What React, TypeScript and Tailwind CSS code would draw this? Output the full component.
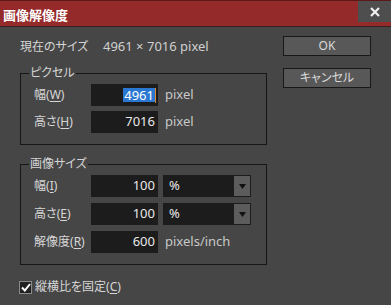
import React from "react";

const font = "font-['Noto_Sans','Noto_Sans_CJK_JP',sans-serif] [font-feature-settings:'palt']";

function NumInput({ value, selected }: { value: string; selected?: boolean }) {
  return (
    <div className="w-[67px] h-[22px] bg-[#1c1c1c] flex items-center justify-end pr-[2px] text-[13px] text-[#e8e8e8]">
      {selected ? (
        <>
          <span className="bg-[#2a78d2] text-white px-[1px] leading-[14px]">{value}</span>
          <span className="w-[1px] h-[15px] bg-[#e08a2a]" />
        </>
      ) : (
        <span className="pr-[1px]">{value}</span>
      )}
    </div>
  );
}

function Select({ value }: { value: string }) {
  return (
    <div className="w-[88px] h-[22px] bg-[#1c1c1c] flex items-stretch p-[1px] pr-[1px]">
      <div className="flex-1 flex items-center pl-[5px] text-[13px] text-[#e8e8e8]">{value}</div>
      <div className="w-[16px] bg-[#5c5c5c] flex items-center justify-center">
        <svg width="7" height="5" viewBox="0 0 7 5">
          <path d="M0 0 H7 L3.5 5 Z" fill="#111" />
        </svg>
      </div>
    </div>
  );
}

function Label({ text, k }: { text: string; k: string }) {
  return (
    <div className="w-[57px] shrink-0 text-[12px] text-[#d6d6d6] whitespace-nowrap">
      {text}(<u className="underline-offset-2">{k}</u>)
    </div>
  );
}

export default function App() {
  return (
    <div className={`w-[391px] h-[305px] bg-[#464646] flex flex-col overflow-hidden ${font}`}>
      <div className="h-[27px] bg-[#952a2b] border-t border-[#5a1a1a] border-b border-b-[#3a2020] flex items-start justify-between">
        <div className="pl-[3px] pt-[6px] text-[13px] font-bold text-white leading-[16px]">画像解像度</div>
        <div className="w-[33px] h-[21px] bg-[#4e4e4e] flex items-center justify-center">
          <svg width="10" height="10" viewBox="0 0 10 10">
            <path d="M1 1 L9 9 M9 1 L1 9" stroke="#f0f0f0" strokeWidth="2.2" />
          </svg>
        </div>
      </div>
      <div className="flex pl-[20px] gap-[16px]">
        <div className="w-[247px] flex flex-col">
          <div className="h-[16px] mt-[12px] flex items-center text-[12px] text-[#d6d6d6]">
            <div className="w-[83px] shrink-0">現在のサイズ</div>
            <div className="text-[13px] text-[#d0d0d0] whitespace-nowrap">4961 × 7016 pixel</div>
          </div>
          <fieldset className="mt-[10px] border border-[#161616] pl-[13px] pb-[11px] pt-[3px] flex flex-col gap-[5px]">
            <legend className="-ml-[5px] px-[1px] text-[12px] leading-[16px] text-[#d6d6d6]">ピクセル</legend>
            <div className="flex items-center">
              <Label text="幅" k="W" />
              <NumInput value="4961" selected />
              <span className="ml-[7px] text-[13px] text-[#c8c8c8]">pixel</span>
            </div>
            <div className="flex items-center">
              <Label text="高さ" k="H" />
              <NumInput value="7016" />
              <span className="ml-[7px] text-[13px] text-[#c8c8c8]">pixel</span>
            </div>
          </fieldset>
          <fieldset className="mt-[11px] border border-[#161616] pl-[13px] pb-[11px] pt-[3px] flex flex-col gap-[6px]">
            <legend className="-ml-[5px] px-[1px] text-[12px] leading-[16px] text-[#d6d6d6]">画像サイズ</legend>
            <div className="flex items-center">
              <Label text="幅" k="I" />
              <NumInput value="100" />
              <div className="ml-[5px]"><Select value="%" /></div>
            </div>
            <div className="flex items-center">
              <Label text="高さ" k="E" />
              <NumInput value="100" />
              <div className="ml-[5px]"><Select value="%" /></div>
            </div>
            <div className="flex items-center">
              <Label text="解像度" k="R" />
              <NumInput value="600" />
              <span className="ml-[7px] text-[13px] text-[#c8c8c8]">pixels/inch</span>
            </div>
          </fieldset>
          <div className="mt-[13px] -ml-[1px] flex items-center gap-[3px]">
            <div className="w-[13px] h-[13px] border border-[#8a8a8a] bg-[#222] flex items-center justify-center">
              <svg width="10" height="9" viewBox="0 0 10 9">
                <path d="M1 4.5 L3.8 7.5 L9 1" stroke="#fff" strokeWidth="2" fill="none" />
              </svg>
            </div>
            <span className="text-[12px] text-[#d6d6d6]">
              縦横比を固定(<u className="underline-offset-2">C</u>)
            </span>
          </div>
        </div>
        <div className="w-[88px] flex flex-col gap-[12px] mt-[9px]">
          <div className="h-[20px] border border-[#181818] bg-[#585858] flex items-center justify-center text-[12px] text-[#d8d8d8]">OK</div>
          <div className="h-[20px] border border-[#181818] bg-[#585858] flex items-center justify-center text-[12px] text-[#d8d8d8]">キャンセル</div>
        </div>
      </div>
    </div>
  );
}
